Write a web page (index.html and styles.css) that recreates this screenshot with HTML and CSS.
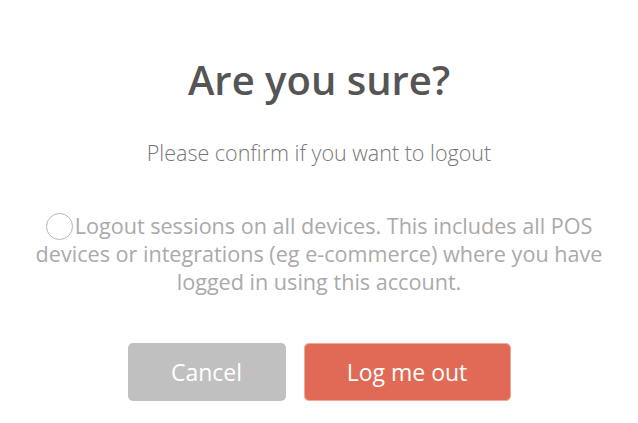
FILE: index.html
```html
<!DOCTYPE html>
<html lang="en">
<head>
  <meta charset="UTF-8">
  <title>Logout</title>
  <link rel="stylesheet" href="styles.css">
</head>
<body>
  <div class="dialog">
    <h2>Are you sure?</h2>
    <p class="subtitle">Please confirm if you want to logout</p>

    <label class="all-devices">
      <span class="check"></span>Logout sessions on all devices. This includes all POS devices or integrations (eg e-commerce) where you have logged in using this account.
    </label>

    <div class="actions">
      <button class="btn cancel">Cancel</button>
      <button class="btn logout">Log me out</button>
    </div>
  </div>
</body>
</html>
```

FILE: styles.css
```css
body {
  margin: 0;
  padding: 0;
  font-family: 'Open Sans', sans-serif;
  background: #fff;
}

.dialog {
  width: 638px;
  padding: 52px 30px 0;
  box-sizing: border-box;
  text-align: center;
}

h2 {
  margin: 0;
  font-size: 40px;
  font-weight: 600;
  color: #555;
  line-height: 56px;
}

.subtitle {
  margin: 31px 0 0;
  font-size: 21.5px;
  font-weight: 300;
  color: #777;
  line-height: 28px;
}

.all-devices {
  display: block;
  margin-top: 45px;
  font-size: 21.6px;
  color: #aaa;
  line-height: 28px;
}

.check {
  display: inline-block;
  width: 25px;
  height: 25px;
  border: 1px solid #b5b5b5;
  border-radius: 50%;
  vertical-align: -6px;
  margin-right: 2px;
}

.actions {
  display: flex;
  justify-content: center;
  gap: 18px;
  margin-top: 47px;
}

.btn {
  height: 58px;
  border: none;
  border-radius: 5px;
  color: #fff;
  font-family: 'Open Sans', sans-serif;
  font-size: 23px;
  cursor: pointer;
}

.cancel {
  width: 158px;
  background: #c0c0c0;
}

.logout {
  width: 207px;
  background: #e06a56;
  border: 1px solid #f0a896;
}
```
